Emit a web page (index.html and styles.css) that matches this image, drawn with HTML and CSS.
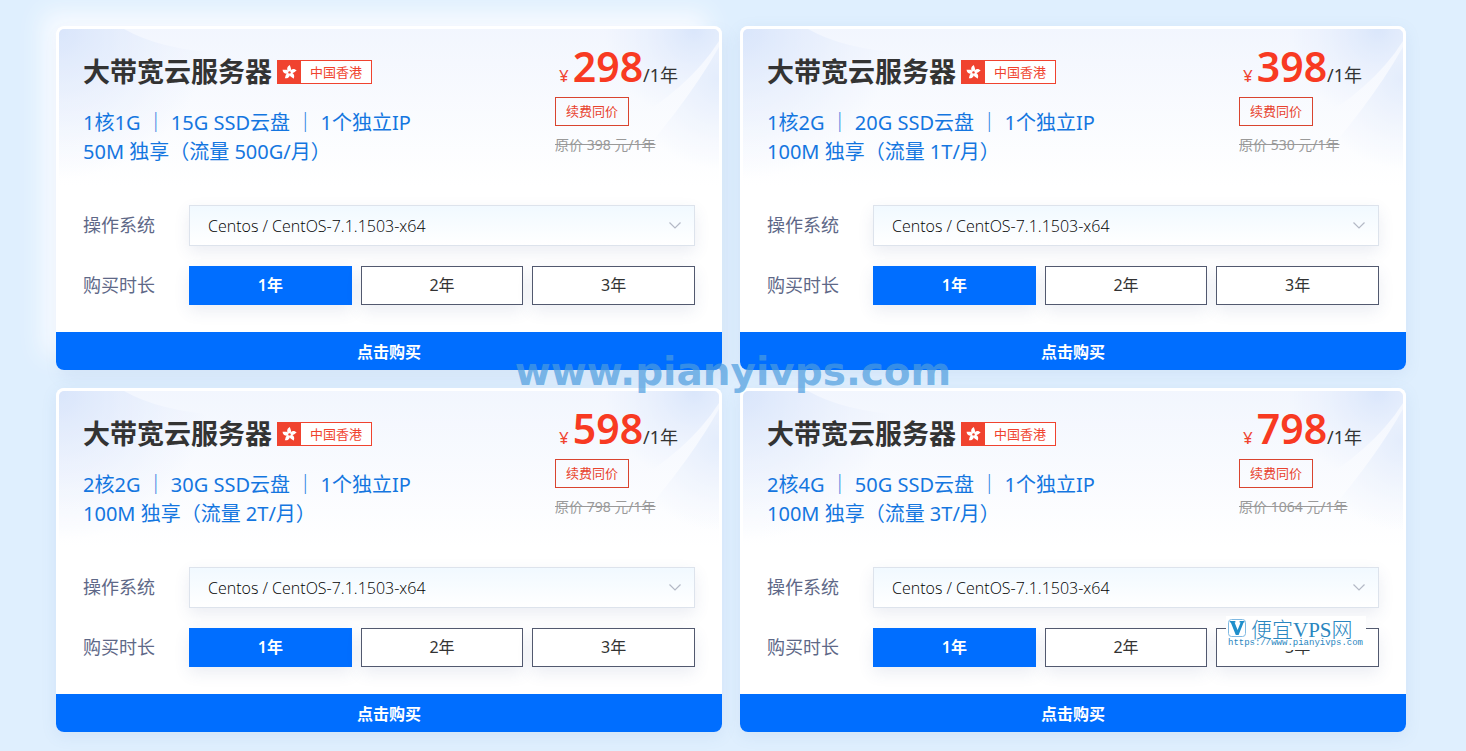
FILE: index.html
```
<!DOCTYPE html>
<html lang="zh-CN">
<head>
    <meta charset="utf-8">
    <meta name="viewport" content="width=device-width, initial-scale=1">
    <title>大带宽云服务器</title>
    <link rel="stylesheet" href="styles.css">
</head>
<body>
    <!-- 公用图形 -->
    <svg class="defs" aria-hidden="true">
        <symbol id="flower" viewBox="0 0 24 24">
            <g fill="#fff">
                <path d="M12 13C7 9.6 7.6 3.6 12.6 1.4C12.4 3.6 17 8 12 13Z"/>
                <path d="M12 13C7 9.6 7.6 3.6 12.6 1.4C12.4 3.6 17 8 12 13Z" transform="rotate(72 12 12.6)"/>
                <path d="M12 13C7 9.6 7.6 3.6 12.6 1.4C12.4 3.6 17 8 12 13Z" transform="rotate(144 12 12.6)"/>
                <path d="M12 13C7 9.6 7.6 3.6 12.6 1.4C12.4 3.6 17 8 12 13Z" transform="rotate(216 12 12.6)"/>
                <path d="M12 13C7 9.6 7.6 3.6 12.6 1.4C12.4 3.6 17 8 12 13Z" transform="rotate(288 12 12.6)"/>
            </g>
            <circle cx="12" cy="12.6" r="1.8" fill="#f0432f"/>
        </symbol>
        <symbol id="arrow" viewBox="0 0 14 14">
            <path d="M1.5 4.5L7 10L12.5 4.5" fill="none" stroke="#b4b9c6" stroke-width="1.2"/>
        </symbol>
        <symbol id="rays" viewBox="0 0 660 160" preserveAspectRatio="none">
            <radialGradient id="g1" gradientUnits="userSpaceOnUse" cx="0" cy="0" r="150">
                <stop offset="0" stop-color="#cfdffb"/>
                <stop offset="1" stop-color="#dfe9fc" stop-opacity="0"/>
            </radialGradient>
            <radialGradient id="g2" gradientUnits="userSpaceOnUse" cx="635" cy="0" r="90">
                <stop offset="0" stop-color="#d0e0fb"/>
                <stop offset="1" stop-color="#e3ecfd" stop-opacity="0"/>
            </radialGradient>
            <radialGradient id="g3" gradientUnits="userSpaceOnUse" cx="660" cy="50" r="90">
                <stop offset="0" stop-color="#dce8fc"/>
                <stop offset="1" stop-color="#e6eefc" stop-opacity="0"/>
            </radialGradient>
            <path d="M0 0H65Q100 20 160 24V160H0Z" fill="url(#g1)"/>
            <path d="M540 0H660V12Q630 60 560 100Z" fill="url(#g2)"/>
            <path d="M660 18V150H560Q625 80 660 18Z" fill="url(#g3)"/>
        </symbol>
    </svg>

    <div class="page">
        <main class="list">

            <form class="card active">
                <svg class="rays" aria-hidden="true"><use href="#rays"/></svg>
                <div class="head">
                    <div class="info">
                        <div class="title">
                            <h2>大带宽云服务器</h2>
                            <span class="area"><svg class="flag" aria-hidden="true"><use href="#flower"/></svg><em>中国香港</em></span>
                        </div>
                        <p class="spec">1核1G ｜ 15G SSD云盘 ｜ 1个独立IP</p>
                        <p class="spec">50M 独享（流量 500G/月）</p>
                    </div>
                    <div class="price">
                        <p class="now"><i>¥</i><b>298</b>/1年</p>
                        <span class="same">续费同价</span>
                        <del>原价 398 元/1年</del>
                    </div>
                </div>
                <div class="row">
                    <label class="name" for="os1">操作系统</label>
                    <div class="select">
                        <select id="os1"><option>Centos / CentOS-7.1.1503-x64</option></select>
                        <svg aria-hidden="true"><use href="#arrow"/></svg>
                    </div>
                </div>
                <div class="row" role="radiogroup" aria-labelledby="t1">
                    <span class="name" id="t1">购买时长</span>
                    <div class="years">
                        <label><input type="radio" name="year" checked><span>1年</span></label>
                        <label><input type="radio" name="year"><span>2年</span></label>
                        <label><input type="radio" name="year"><span>3年</span></label>
                    </div>
                </div>
                <button type="button" class="buy">点击购买</button>
            </form>

            <form class="card">
                <svg class="rays" aria-hidden="true"><use href="#rays"/></svg>
                <div class="head">
                    <div class="info">
                        <div class="title">
                            <h2>大带宽云服务器</h2>
                            <span class="area"><svg class="flag" aria-hidden="true"><use href="#flower"/></svg><em>中国香港</em></span>
                        </div>
                        <p class="spec">1核2G ｜ 20G SSD云盘 ｜ 1个独立IP</p>
                        <p class="spec">100M 独享（流量 1T/月）</p>
                    </div>
                    <div class="price">
                        <p class="now"><i>¥</i><b>398</b>/1年</p>
                        <span class="same">续费同价</span>
                        <del>原价 530 元/1年</del>
                    </div>
                </div>
                <div class="row">
                    <label class="name" for="os2">操作系统</label>
                    <div class="select">
                        <select id="os2"><option>Centos / CentOS-7.1.1503-x64</option></select>
                        <svg aria-hidden="true"><use href="#arrow"/></svg>
                    </div>
                </div>
                <div class="row" role="radiogroup" aria-labelledby="t2">
                    <span class="name" id="t2">购买时长</span>
                    <div class="years">
                        <label><input type="radio" name="year" checked><span>1年</span></label>
                        <label><input type="radio" name="year"><span>2年</span></label>
                        <label><input type="radio" name="year"><span>3年</span></label>
                    </div>
                </div>
                <button type="button" class="buy">点击购买</button>
            </form>

            <form class="card">
                <svg class="rays" aria-hidden="true"><use href="#rays"/></svg>
                <div class="head">
                    <div class="info">
                        <div class="title">
                            <h2>大带宽云服务器</h2>
                            <span class="area"><svg class="flag" aria-hidden="true"><use href="#flower"/></svg><em>中国香港</em></span>
                        </div>
                        <p class="spec">2核2G ｜ 30G SSD云盘 ｜ 1个独立IP</p>
                        <p class="spec">100M 独享（流量 2T/月）</p>
                    </div>
                    <div class="price">
                        <p class="now"><i>¥</i><b>598</b>/1年</p>
                        <span class="same">续费同价</span>
                        <del>原价 798 元/1年</del>
                    </div>
                </div>
                <div class="row">
                    <label class="name" for="os3">操作系统</label>
                    <div class="select">
                        <select id="os3"><option>Centos / CentOS-7.1.1503-x64</option></select>
                        <svg aria-hidden="true"><use href="#arrow"/></svg>
                    </div>
                </div>
                <div class="row" role="radiogroup" aria-labelledby="t3">
                    <span class="name" id="t3">购买时长</span>
                    <div class="years">
                        <label><input type="radio" name="year" checked><span>1年</span></label>
                        <label><input type="radio" name="year"><span>2年</span></label>
                        <label><input type="radio" name="year"><span>3年</span></label>
                    </div>
                </div>
                <button type="button" class="buy">点击购买</button>
            </form>

            <form class="card">
                <svg class="rays" aria-hidden="true"><use href="#rays"/></svg>
                <div class="head">
                    <div class="info">
                        <div class="title">
                            <h2>大带宽云服务器</h2>
                            <span class="area"><svg class="flag" aria-hidden="true"><use href="#flower"/></svg><em>中国香港</em></span>
                        </div>
                        <p class="spec">2核4G ｜ 50G SSD云盘 ｜ 1个独立IP</p>
                        <p class="spec">100M 独享（流量 3T/月）</p>
                    </div>
                    <div class="price">
                        <p class="now"><i>¥</i><b>798</b>/1年</p>
                        <span class="same">续费同价</span>
                        <del>原价 1064 元/1年</del>
                    </div>
                </div>
                <div class="row">
                    <label class="name" for="os4">操作系统</label>
                    <div class="select">
                        <select id="os4"><option>Centos / CentOS-7.1.1503-x64</option></select>
                        <svg aria-hidden="true"><use href="#arrow"/></svg>
                    </div>
                </div>
                <div class="row" role="radiogroup" aria-labelledby="t4">
                    <span class="name" id="t4">购买时长</span>
                    <div class="years">
                        <label><input type="radio" name="year" checked><span>1年</span></label>
                        <label><input type="radio" name="year"><span>2年</span></label>
                        <label><input type="radio" name="year"><span>3年</span></label>
                    </div>
                </div>
                <button type="button" class="buy">点击购买</button>
            </form>

        </main>

        <!-- 水印 -->
        <div class="watermark">www.pianyivps.com</div>
        <div class="stamp">
            <div class="stamp-name">
                <svg viewBox="0 0 18 18" aria-hidden="true">
                    <rect x="0.5" y="0.5" width="17" height="17" rx="3" fill="#fff" stroke="#7fb9e2"/>
                    <path d="M1.8 2H7.4V3.4H6.6L9.6 11L12.6 3.4H11.6V2H16.4V3.4H15.6L10.6 16H7.8L2.8 3.4H1.8Z" fill="#1f8fcb"/>
                </svg>
                <span>便宜VPS网</span>
            </div>
            <div class="stamp-url">https://www.pianyivps.com</div>
        </div>
    </div>
</body>
</html>
```
FILE: styles.css
```
* {
    box-sizing: border-box;
}
body {
    margin: 0;
    background-color: #dfeffe;
    font-family: "Noto Sans", "Noto Sans CJK SC", sans-serif;
    color: #333;
}
h2, p {
    margin: 0;
}
.defs {
    position: absolute;
    width: 0;
    height: 0;
}
.page {
    position: relative;
    overflow: hidden;
    padding: 26px 60px 19px 56px;
}
.list {
    display: grid;
    grid-template-columns: 1fr 1fr;
    gap: 18px;
}

/* 套餐卡片 */
.card {
    position: relative;
    display: flex;
    flex-direction: column;
    border-radius: 8px;
    background: linear-gradient(#f2f6fe, #fff 160px);
    box-shadow: 0 4px 16px rgba(90, 130, 190, 0.1);
}
.card.active {
    box-shadow: 4px 8px 16px rgba(90, 130, 190, 0.1), -14px -14px 24px #f8fbff;
}
.card::after {
    content: "";
    position: absolute;
    inset: 0 0 38px 0;
    border: 3px solid #fff;
    border-bottom: none;
    border-radius: 8px 8px 0 0;
    pointer-events: none;
}
.rays {
    position: absolute;
    top: 3px;
    left: 3px;
    width: calc(100% - 6px);
    height: 160px;
    opacity: 0.7;
}
.head {
    position: relative;
    display: flex;
    justify-content: space-between;
    padding: 26px 27px 39px;
}
.title {
    display: flex;
    align-items: center;
    gap: 5px;
    height: 40px;
    margin-bottom: 16px;
}
.title h2 {
    font-size: 27px;
    line-height: 40px;
    font-weight: 600;
}
.area {
    display: flex;
    height: 24px;
    border: 1px solid #f0432f;
    background-color: #fff;
}
.flag {
    width: 23px;
    height: 22px;
    padding: 3px;
    background-color: #f0432f;
}
.area em {
    padding: 0 9px;
    font-size: 13px;
    line-height: 22px;
    font-style: normal;
    color: #f0432f;
}
.spec {
    font-size: 20px;
    line-height: 29px;
    color: #1476e0;
}
.price {
    display: flex;
    flex-direction: column;
    align-items: flex-start;
    width: 140px;
    font-size: 13px;
    white-space: nowrap;
}
.now {
    height: 45px;
    padding-left: 4px;
    font-size: 18px;
    line-height: 28px;
}
.now i {
    margin-right: 4px;
    font-size: 17px;
    font-style: normal;
    color: #f0432f;
}
.now b {
    font-size: 41px;
    font-weight: 600;
    color: #f83a22;
}
.same {
    height: 29px;
    padding: 0 10px;
    border: 1px solid #d9442f;
    line-height: 27px;
    color: #e8432f;
}
.price del {
    margin-top: 9px;
    font-size: 14px;
    line-height: 20px;
    color: #999;
}

/* 配置选项 */
.row {
    position: relative;
    display: flex;
    align-items: center;
    margin-bottom: 20px;
    padding: 0 27px;
}
.name {
    width: 106px;
    font-size: 18px;
    line-height: 26px;
    padding-bottom: 2px;
    color: #5e6887;
}
.select {
    position: relative;
    flex: 1;
    box-shadow: 0 6px 16px rgba(60, 80, 140, 0.1);
}
.select select {
    display: block;
    width: 100%;
    height: 41px;
    padding: 0 18px;
    appearance: none;
    border: 1px solid #dde3ec;
    border-radius: 0;
    background: linear-gradient(#f1f9ff, #fff);
    font-family: "Open Sans", "Noto Sans CJK SC", sans-serif;
    font-size: 16px;
    font-weight: 300;
    color: #000;
}
.select svg {
    position: absolute;
    top: 13px;
    right: 13px;
    width: 14px;
    height: 14px;
    pointer-events: none;
}
.years {
    display: grid;
    flex: 1;
    grid-template-columns: 1fr 1fr 1fr;
    gap: 9px;
}
.years label {
    position: relative;
    height: 39px;
    box-shadow: 0 6px 16px rgba(60, 80, 140, 0.1);
}
.years input {
    position: absolute;
    inset: 0;
    margin: 0;
    opacity: 0;
}
.years span {
    display: block;
    border: 1px solid #52596f;
    background-color: #fff;
    font-size: 16px;
    line-height: 37px;
    text-align: center;
}
.years input:checked + span {
    border-color: #006eff;
    background-color: #006eff;
    font-weight: 600;
    color: #fff;
}
.buy {
    height: 38px;
    margin-top: 7px;
    border: none;
    border-radius: 0 0 8px 8px;
    background-color: #006eff;
    font-family: inherit;
    font-size: 16px;
    font-weight: 600;
    color: #fff;
}

/* 水印 */
.watermark {
    position: absolute;
    top: 50%;
    left: 50%;
    transform: translate(-50%, -50%);
    padding-bottom: 8px;
    font-family: "DejaVu Sans", sans-serif;
    font-size: 39px;
    font-weight: bold;
    line-height: 44px;
    color: rgba(76, 156, 222, 0.7);
    pointer-events: none;
}
.stamp {
    position: absolute;
    right: 100px;
    bottom: 101px;
    padding: 2px;
    width: 140px;
    background-color: #fff;
    color: #2a86c0;
    pointer-events: none;
}
.stamp-name {
    display: flex;
    align-items: center;
    gap: 5px;
    height: 20px;
    font-family: "Liberation Serif", "Noto Sans CJK SC", serif;
    font-size: 21px;
    font-weight: 300;
    white-space: nowrap;
}
.stamp-name svg {
    width: 18px;
    height: 18px;
}
.stamp-url {
    font-family: "Liberation Mono", monospace;
    font-size: 9px;
    line-height: 10px;
}
```
